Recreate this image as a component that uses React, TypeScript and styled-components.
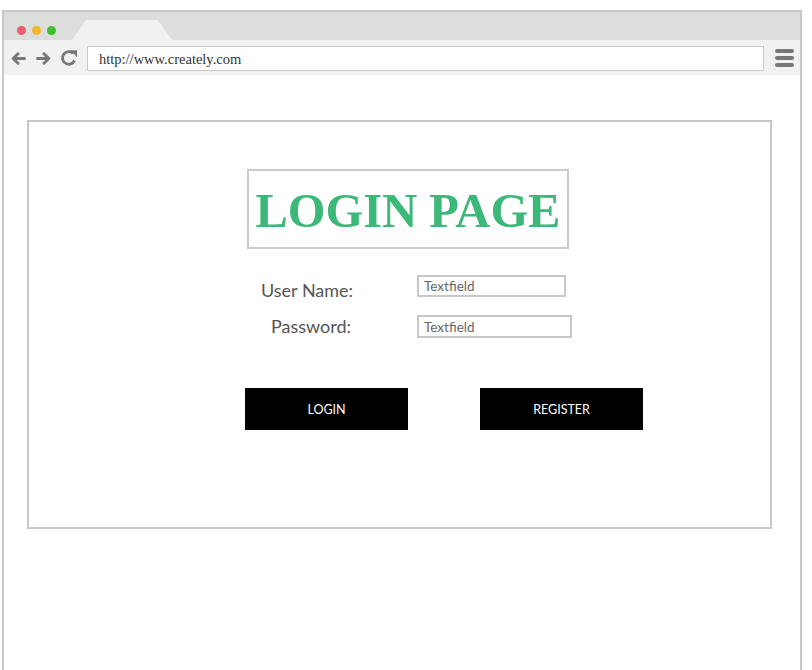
import styled, { createGlobalStyle } from "styled-components";

const GlobalStyle = createGlobalStyle`
  html, body {
    margin: 0;
    padding: 0;
    background: #ffffff;
    overflow: hidden;
  }
  * {
    box-sizing: border-box;
  }
`;

// Browser chrome
const Page = styled.div`
  width: 812px;
  height: 670px;
  padding: 10px 0 0 2px;
`;

const Window = styled.div`
  width: 800px;
  height: 680px;
  border: 2px solid #c8c8c8;
  border-bottom: none;
  display: flex;
  flex-direction: column;
`;

const TabBar = styled.div`
  height: 28px;
  background: #dcdedc;
  display: flex;
  align-items: flex-end;
  padding-left: 13px;
`;

const Dots = styled.div`
  display: flex;
  gap: 6px;
  align-self: center;
  margin-top: 8px;
`;

const Dot = styled.span<{ $color: string }>`
  width: 9px;
  height: 9px;
  border-radius: 50%;
  background: ${(p) => p.$color};
`;

const Tab = styled.div`
  width: 100px;
  height: 20px;
  margin-left: 16px;
  background: #f1f1f1;
  clip-path: polygon(14px 0, 86px 0, 100px 100%, 0 100%);
`;

const Toolbar = styled.div`
  height: 35px;
  background: #f1f1f1;
  display: flex;
  align-items: center;
  padding: 1px 5px 0 2px;
`;

const NavButton = styled.span`
  display: flex;
  align-items: center;
  justify-content: center;
  width: 25px;
  color: #777777;
`;

const Address = styled.div`
  width: 677px;
  height: 25px;
  margin-left: 6px;
  background: #ffffff;
  border: 1px solid #c8c8c8;
  display: flex;
  align-items: center;
  padding: 2px 0 0 11px;
  font-family: "Liberation Serif", serif;
  font-size: 14.5px;
  color: #333333;
`;

const Menu = styled.div`
  margin-left: auto;
  display: flex;
  flex-direction: column;
  gap: 3px;
  padding-right: 1px;

  span {
    display: block;
    width: 19px;
    height: 4px;
    border-radius: 2px;
    background: #777777;
  }
`;

// Page content
const Content = styled.div`
  padding: 45px 0 0 23px;
`;

const Card = styled.div`
  width: 745px;
  height: 409px;
  border: 2px solid #c8c8c8;
  padding: 47px 0 0 218px;
`;

const TitleBox = styled.div`
  width: 322px;
  height: 80px;
  border: 2px solid #cccccc;
  display: flex;
  align-items: center;
  justify-content: center;
  padding-top: 2px;
  font-family: "Liberation Serif", serif;
  font-weight: bold;
  font-size: 48.5px;
  color: #3cb878;
`;

const Form = styled.div`
  display: flex;
  flex-direction: column;
  gap: 18px;
  margin-top: 26px;
`;

const Row = styled.div`
  display: flex;
  align-items: flex-start;
`;

const Label = styled.label<{ $shift: number; $top: number }>`
  width: 170px;
  font-family: Lato, sans-serif;
  font-size: 18px;
  line-height: 22px;
  color: #555555;
  padding-left: ${(p) => p.$shift}px;
  margin-top: ${(p) => p.$top}px;
  margin-bottom: ${(p) => -p.$top}px;
`;

const Field = styled.div<{ $width: number; $height: number }>`
  width: ${(p) => p.$width}px;
  height: ${(p) => p.$height}px;
  border: 2px solid #c8c8c8;
  padding-left: 5px;
  display: flex;
  align-items: center;
  font-family: Lato, sans-serif;
  font-size: 13.5px;
  color: #666666;
`;

const Buttons = styled.div`
  display: flex;
  gap: 72px;
  margin-top: 50px;
  margin-left: -2px;
`;

const Button = styled.button`
  width: 163px;
  height: 42px;
  border: none;
  background: #000000;
  color: #ffffff;
  font-family: Lato, sans-serif;
  font-size: 12.5px;
  padding-top: 1px;
  cursor: pointer;
`;

function BackIcon({ flip }: { flip?: boolean }) {
  return (
    <svg
      width="15"
      height="13"
      viewBox="0 0 15 13"
      style={flip ? { transform: "scaleX(-1)" } : undefined}
    >
      <path
        d="M13.5 6.5H2.5M7 1.8L2.2 6.5 7 11.2"
        fill="none"
        stroke="currentColor"
        strokeWidth="3"
        strokeLinecap="round"
        strokeLinejoin="round"
      />
    </svg>
  );
}

function ReloadIcon() {
  return (
    <svg width="18" height="18" viewBox="0 0 18 18">
      <path
        d="M14.6 11.4A6.3 6.3 0 1 1 13.2 4.4"
        fill="none"
        stroke="currentColor"
        strokeWidth="2.8"
      />
      <path d="M10.2 1.2L17 1.2 17 8Z" fill="currentColor" />
    </svg>
  );
}

export default function App() {
  return (
    <Page>
      <GlobalStyle />
      <Window>
        <TabBar>
          <Dots>
            <Dot $color="#ec5d6e" />
            <Dot $color="#f0b72f" />
            <Dot $color="#3ec02c" />
          </Dots>
          <Tab />
        </TabBar>
        <Toolbar>
          <NavButton>
            <BackIcon />
          </NavButton>
          <NavButton>
            <BackIcon flip />
          </NavButton>
          <NavButton>
            <ReloadIcon />
          </NavButton>
          <Address>http://www.creately.com</Address>
          <Menu>
            <span />
            <span />
            <span />
          </Menu>
        </Toolbar>
        <Content>
          <Card>
            <TitleBox>LOGIN PAGE</TitleBox>
            <Form>
              <Row>
                <Label $shift={14} $top={4}>
                  User Name:
                </Label>
                <Field $width={149} $height={22}>
                  Textfield
                </Field>
              </Row>
              <Row>
                <Label $shift={24} $top={0}>
                  Password:
                </Label>
                <Field $width={155} $height={23}>
                  Textfield
                </Field>
              </Row>
            </Form>
            <Buttons>
              <Button>LOGIN</Button>
              <Button>REGISTER</Button>
            </Buttons>
          </Card>
        </Content>
      </Window>
    </Page>
  );
}
